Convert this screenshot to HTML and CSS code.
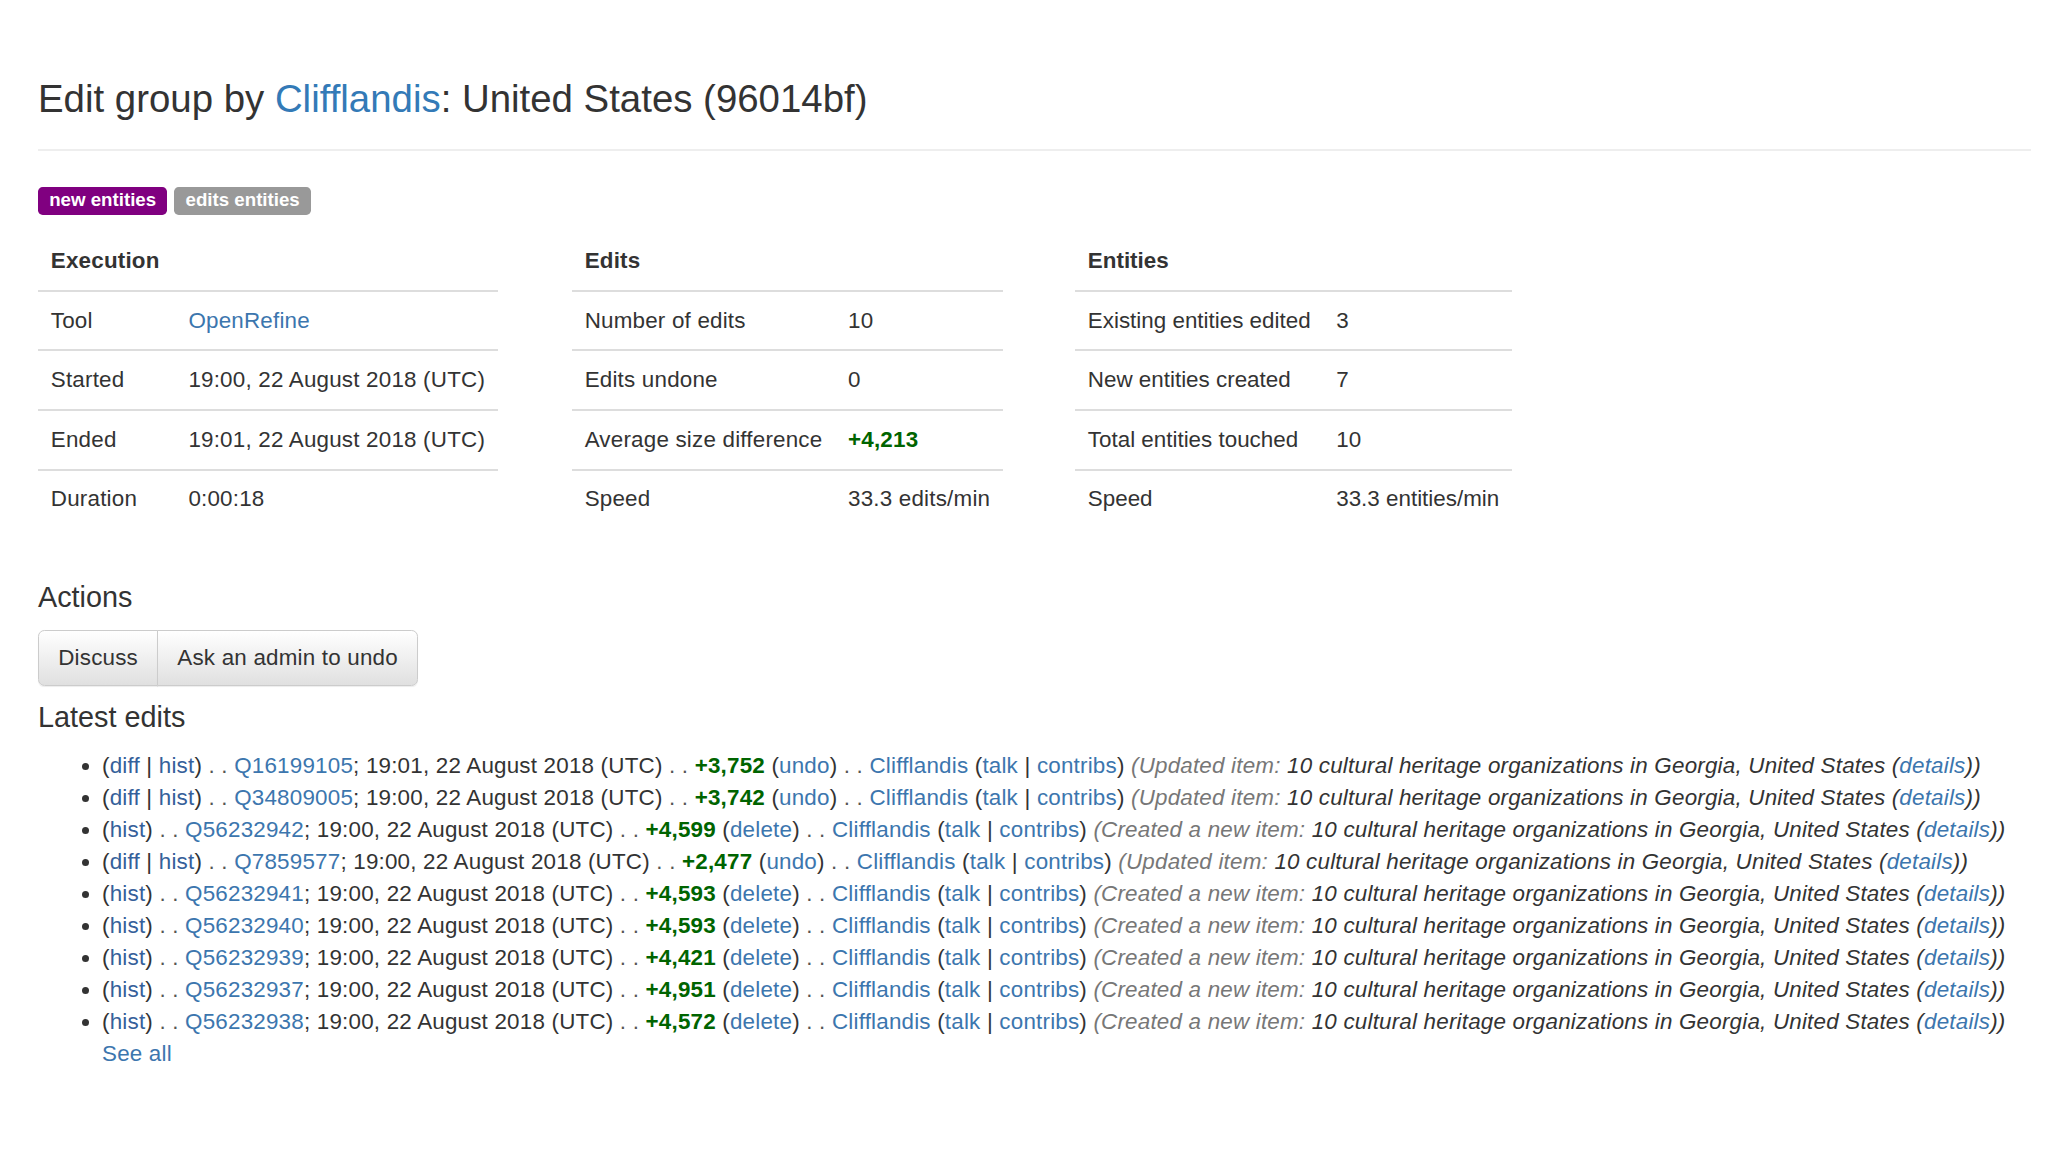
FILE: index.html
```html
<!DOCTYPE html>
<html lang="en">
<head>
<meta charset="utf-8">
<title>Edit group by Clifflandis: United States (96014bf)</title>
<link rel="stylesheet" href="styles.css">
</head>
<body>
<div class="page">
  <div class="page-header">
    <h1 class="title">Edit group by <a href="#">Clifflandis</a>: United States (96014bf)</h1>
  </div>

  <div class="labels">
    <span class="label label-new">new entities</span>
    <span class="label label-edits">edits entities</span>
  </div>

  <div class="stats">
    <table class="stat-table t-exec">
      <thead><tr><th>Execution</th><th></th></tr></thead>
      <tbody>
        <tr><td>Tool</td><td><a href="#">OpenRefine</a></td></tr>
        <tr><td>Started</td><td>19:00, 22 August 2018 (UTC)</td></tr>
        <tr><td>Ended</td><td>19:01, 22 August 2018 (UTC)</td></tr>
        <tr><td>Duration</td><td>0:00:18</td></tr>
      </tbody>
    </table>
    <table class="stat-table t-edits">
      <thead><tr><th>Edits</th><th></th></tr></thead>
      <tbody>
        <tr><td>Number of edits</td><td>10</td></tr>
        <tr><td>Edits undone</td><td>0</td></tr>
        <tr><td>Average size difference</td><td><span class="pos">+4,213</span></td></tr>
        <tr><td>Speed</td><td>33.3 edits/min</td></tr>
      </tbody>
    </table>
    <table class="stat-table t-ent">
      <thead><tr><th>Entities</th><th></th></tr></thead>
      <tbody>
        <tr><td>Existing entities edited</td><td>3</td></tr>
        <tr><td>New entities created</td><td>7</td></tr>
        <tr><td>Total entities touched</td><td>10</td></tr>
        <tr><td>Speed</td><td>33.3 entities/min</td></tr>
      </tbody>
    </table>
  </div>

  <h2 class="section">Actions</h2>
  <div class="btn-group">
    <button class="btn">Discuss</button><button class="btn">Ask an admin to undo</button>
  </div>

  <h2 class="section section-edits">Latest edits</h2>
  <ul class="edits">
    <li>(<a class="dl" href="#">diff</a> | <a class="dl" href="#">hist</a>) <span class="sep">. .</span> <a href="#">Q16199105</a>; 19:01, 22 August 2018 (UTC) <span class="sep">. .</span> <span class="pos">+3,752</span> (<a href="#">undo</a>) <span class="sep">. .</span> <a href="#">Clifflandis</a> (<a href="#">talk</a> | <a href="#">contribs</a>) <span class="comment"><span class="auto">(Updated item:</span> 10 cultural heritage organizations in Georgia, United States (<a href="#">details</a>))</span></li>
    <li>(<a class="dl" href="#">diff</a> | <a class="dl" href="#">hist</a>) <span class="sep">. .</span> <a href="#">Q34809005</a>; 19:00, 22 August 2018 (UTC) <span class="sep">. .</span> <span class="pos">+3,742</span> (<a href="#">undo</a>) <span class="sep">. .</span> <a href="#">Clifflandis</a> (<a href="#">talk</a> | <a href="#">contribs</a>) <span class="comment"><span class="auto">(Updated item:</span> 10 cultural heritage organizations in Georgia, United States (<a href="#">details</a>))</span></li>
    <li>(<a class="dl" href="#">hist</a>) <span class="sep">. .</span> <a href="#">Q56232942</a>; 19:00, 22 August 2018 (UTC) <span class="sep">. .</span> <span class="pos">+4,599</span> (<a href="#">delete</a>) <span class="sep">. .</span> <a href="#">Clifflandis</a> (<a href="#">talk</a> | <a href="#">contribs</a>) <span class="comment"><span class="auto">(Created a new item:</span> 10 cultural heritage organizations in Georgia, United States (<a href="#">details</a>))</span></li>
    <li>(<a class="dl" href="#">diff</a> | <a class="dl" href="#">hist</a>) <span class="sep">. .</span> <a href="#">Q7859577</a>; 19:00, 22 August 2018 (UTC) <span class="sep">. .</span> <span class="pos">+2,477</span> (<a href="#">undo</a>) <span class="sep">. .</span> <a href="#">Clifflandis</a> (<a href="#">talk</a> | <a href="#">contribs</a>) <span class="comment"><span class="auto">(Updated item:</span> 10 cultural heritage organizations in Georgia, United States (<a href="#">details</a>))</span></li>
    <li>(<a class="dl" href="#">hist</a>) <span class="sep">. .</span> <a href="#">Q56232941</a>; 19:00, 22 August 2018 (UTC) <span class="sep">. .</span> <span class="pos">+4,593</span> (<a href="#">delete</a>) <span class="sep">. .</span> <a href="#">Clifflandis</a> (<a href="#">talk</a> | <a href="#">contribs</a>) <span class="comment"><span class="auto">(Created a new item:</span> 10 cultural heritage organizations in Georgia, United States (<a href="#">details</a>))</span></li>
    <li>(<a class="dl" href="#">hist</a>) <span class="sep">. .</span> <a href="#">Q56232940</a>; 19:00, 22 August 2018 (UTC) <span class="sep">. .</span> <span class="pos">+4,593</span> (<a href="#">delete</a>) <span class="sep">. .</span> <a href="#">Clifflandis</a> (<a href="#">talk</a> | <a href="#">contribs</a>) <span class="comment"><span class="auto">(Created a new item:</span> 10 cultural heritage organizations in Georgia, United States (<a href="#">details</a>))</span></li>
    <li>(<a class="dl" href="#">hist</a>) <span class="sep">. .</span> <a href="#">Q56232939</a>; 19:00, 22 August 2018 (UTC) <span class="sep">. .</span> <span class="pos">+4,421</span> (<a href="#">delete</a>) <span class="sep">. .</span> <a href="#">Clifflandis</a> (<a href="#">talk</a> | <a href="#">contribs</a>) <span class="comment"><span class="auto">(Created a new item:</span> 10 cultural heritage organizations in Georgia, United States (<a href="#">details</a>))</span></li>
    <li>(<a class="dl" href="#">hist</a>) <span class="sep">. .</span> <a href="#">Q56232937</a>; 19:00, 22 August 2018 (UTC) <span class="sep">. .</span> <span class="pos">+4,951</span> (<a href="#">delete</a>) <span class="sep">. .</span> <a href="#">Clifflandis</a> (<a href="#">talk</a> | <a href="#">contribs</a>) <span class="comment"><span class="auto">(Created a new item:</span> 10 cultural heritage organizations in Georgia, United States (<a href="#">details</a>))</span></li>
    <li>(<a class="dl" href="#">hist</a>) <span class="sep">. .</span> <a href="#">Q56232938</a>; 19:00, 22 August 2018 (UTC) <span class="sep">. .</span> <span class="pos">+4,572</span> (<a href="#">delete</a>) <span class="sep">. .</span> <a href="#">Clifflandis</a> (<a href="#">talk</a> | <a href="#">contribs</a>) <span class="comment"><span class="auto">(Created a new item:</span> 10 cultural heritage organizations in Georgia, United States (<a href="#">details</a>))</span></li>
    <li class="see-all"><a href="#">See all</a></li>
  </ul>
</div>
</body>
</html>
```

FILE: styles.css
```css
html, body {
  margin: 0;
  padding: 0;
  background: #ffffff;
}

body {
  font-family: "Liberation Sans", Arial, Helvetica, sans-serif;
  font-size: 22.4px;
  line-height: 32px;
  letter-spacing: 0.2px;
  color: #333333;
}

a {
  color: #3c76ae;
  text-decoration: none;
}

.page {
  padding: 0 17px 60px 38px;
}

.page-header {
  padding-top: 78px;
  padding-bottom: 29px;
  border-bottom: 2px solid #eeeeee;
}

.title {
  margin: 0;
  font-size: 38.4px;
  line-height: 42.24px;
  font-weight: 400;
  letter-spacing: 0;
  color: #333333;
}

.title a {
  color: #337ab7;
}

.labels {
  display: flex;
  gap: 7px;
  margin-top: 36px;
}

.label {
  display: inline-block;
  font-size: 18.7px;
  line-height: 1;
  font-weight: 700;
  letter-spacing: 0;
  color: #ffffff;
  padding: 3.7px 11.2px 5.6px;
  border-radius: 4.7px;
}

.label-new {
  background: #800080;
}

.label-edits {
  background: #999999;
}

.stats {
  display: flex;
  align-items: flex-start;
  gap: 74px;
  margin-top: 17px;
  margin-bottom: 54px;
}

.stat-table {
  border-collapse: collapse;
  border-spacing: 0;
}

.stat-table th,
.stat-table td {
  padding: 12.8px;
  text-align: left;
  vertical-align: top;
  white-space: nowrap;
}

.stat-table th {
  font-weight: 700;
  border-bottom: 2px solid #dddddd;
}

.stat-table td {
  border-top: 2px solid #dddddd;
}

.stat-table tbody tr:first-child td {
  border-top: none;
}

.t-exec td:first-child {
  min-width: 112px;
}

.t-ent {
  letter-spacing: 0;
  margin-left: -2px;
}

.pos {
  color: #006400;
  font-weight: 700;
}

.section {
  margin: 0 0 16px;
  font-size: 28.8px;
  line-height: 31.7px;
  font-weight: 400;
  letter-spacing: 0;
  color: #333333;
}

.section-edits {
  margin-top: 16px;
}

.btn-group {
  display: flex;
}

.btn {
  font-family: inherit;
  font-size: 22.4px;
  line-height: 32px;
  letter-spacing: 0.2px;
  color: #333333;
  padding: 11px 19.2px;
  border: 1px solid #cccccc;
  background: linear-gradient(to bottom, #ffffff 0%, #e0e0e0 100%);
  box-shadow: inset 0 1px 0 rgba(255, 255, 255, 0.15), 0 1px 1px rgba(0, 0, 0, 0.075);
  border-radius: 0;
  cursor: pointer;
}

.btn:first-child {
  border-radius: 6.4px 0 0 6.4px;
}

.btn:last-child {
  margin-left: -1px;
  border-radius: 0 6.4px 6.4px 0;
}

.edits {
  margin: 0;
  padding-left: 64px;
}

.edits li {
  line-height: 32px;
  white-space: nowrap;
}

.edits a.dl {
  color: #35609a;
}

.sep {
  color: #555555;
}

.comment {
  font-style: italic;
  color: #333333;
}

.comment .auto {
  color: #777777;
}

.see-all {
  list-style: none;
}
```
